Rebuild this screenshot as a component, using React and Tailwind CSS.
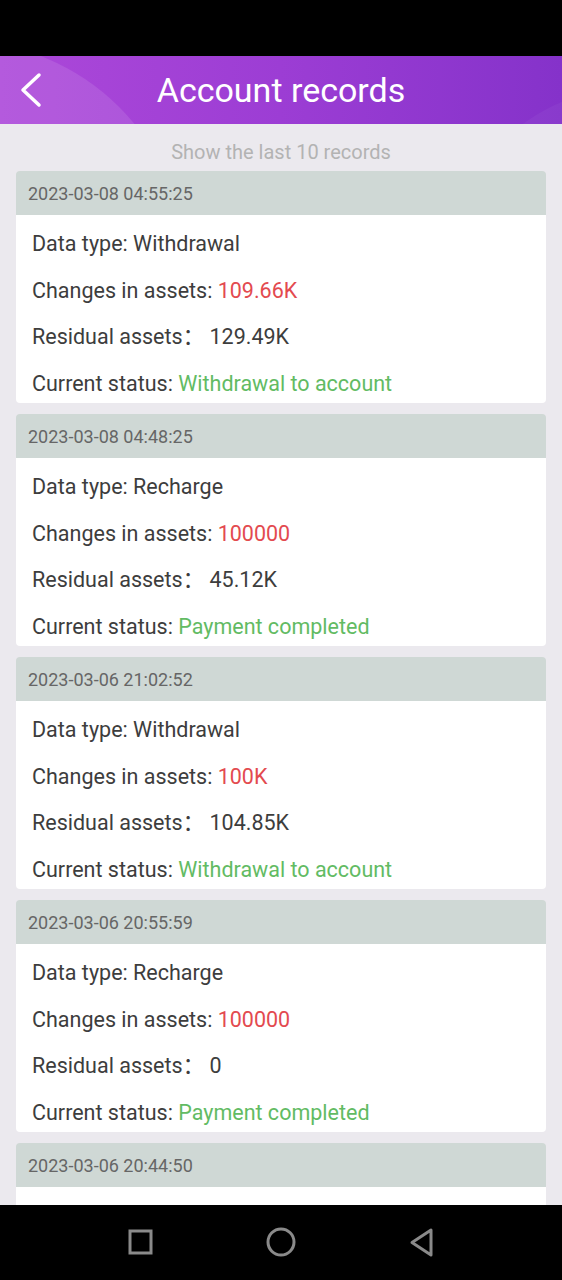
import React from "react";

const records = [
  {
    time: "2023-03-08 04:55:25",
    type: "Withdrawal",
    change: "109.66K",
    residual: "129.49K",
    status: "Withdrawal to account",
  },
  {
    time: "2023-03-08 04:48:25",
    type: "Recharge",
    change: "100000",
    residual: "45.12K",
    status: "Payment completed",
  },
  {
    time: "2023-03-06 21:02:52",
    type: "Withdrawal",
    change: "100K",
    residual: "104.85K",
    status: "Withdrawal to account",
  },
  {
    time: "2023-03-06 20:55:59",
    type: "Recharge",
    change: "100000",
    residual: "0",
    status: "Payment completed",
  },
  // only the header of this one is on screen, the rest is under the nav bar
  { time: "2023-03-06 20:44:50", partial: true },
];

function RecordCard({ record }) {
  return (
    <div className="mb-[11px] mx-[16px]">
      <div className="h-[44px] flex items-center px-[12px] bg-[#cfd8d5] rounded-t-[4px] text-[18px] text-[#666666]">
        {record.time}
      </div>
      {record.partial ? (
        <div className="h-[188px] bg-white rounded-b-[4px]" />
      ) : (
        <div className="h-[188px] bg-white rounded-b-[4px] px-[16px] pt-[6px] text-[21.5px] text-[#3d3d3d]">
          <div className="h-[46.5px] flex items-center">
            Data type: {record.type}
          </div>
          <div className="h-[46.5px] flex items-center">
            Changes in assets:&nbsp;
            <span className="text-[#e34a4f]">{record.change}</span>
          </div>
          <div className="h-[46.5px] flex items-center">
            Residual assets：&nbsp;{record.residual}
          </div>
          <div className="h-[46.5px] flex items-center">
            Current status:&nbsp;
            <span className="text-[#62bb63]">{record.status}</span>
          </div>
        </div>
      )}
    </div>
  );
}

export default function App() {
  return (
    <div
      className="w-[562px] h-[1280px] flex flex-col bg-[#ebe9ee] overflow-hidden"
      style={{ fontFamily: "Roboto, 'Noto Sans CJK SC', sans-serif" }}
    >
      <div className="h-[56px] bg-black shrink-0" />
      <div className="relative h-[68px] shrink-0 flex items-center justify-center bg-gradient-to-r from-[#ac48d9] via-[#9c3dd4] to-[#8532ca] overflow-hidden">
        <div className="absolute left-[-265px] top-[-15px] w-[450px] h-[450px] rounded-full bg-white/10" />
        <div className="absolute left-[440px] top-[30px] w-[400px] h-[400px] rounded-full bg-white/[0.04]" />
        <svg
          className="absolute left-[18px] top-[16px]"
          width="26"
          height="36"
          viewBox="0 0 26 36"
        >
          <path
            d="M21 3 L5 18 L21 33"
            fill="none"
            stroke="white"
            strokeWidth="3.5"
            strokeLinecap="round"
            strokeLinejoin="round"
          />
        </svg>
        <h1 className="relative text-[34px] leading-none text-white">
          Account records
        </h1>
      </div>
      <div className="flex-1 overflow-hidden">
        <p className="pt-[16px] mb-[7px] leading-[24px] text-center text-[20px] text-[#b3b3b3]">
          Show the last 10 records
        </p>
        {records.map((r) => (
          <RecordCard key={r.time} record={r} />
        ))}
      </div>
      <div className="h-[75px] shrink-0 bg-black flex items-center">
        <svg width="562" height="75" viewBox="0 0 562 75">
          <rect
            x="130"
            y="26"
            width="21"
            height="22"
            fill="none"
            stroke="#8a8a8a"
            strokeWidth="3"
          />
          <circle
            cx="281"
            cy="37"
            r="13"
            fill="none"
            stroke="#8a8a8a"
            strokeWidth="3"
          />
          <path
            d="M431 25 L431 50 L412 37.5 Z"
            fill="none"
            stroke="#8a8a8a"
            strokeWidth="3"
            strokeLinejoin="round"
          />
        </svg>
      </div>
    </div>
  );
}
